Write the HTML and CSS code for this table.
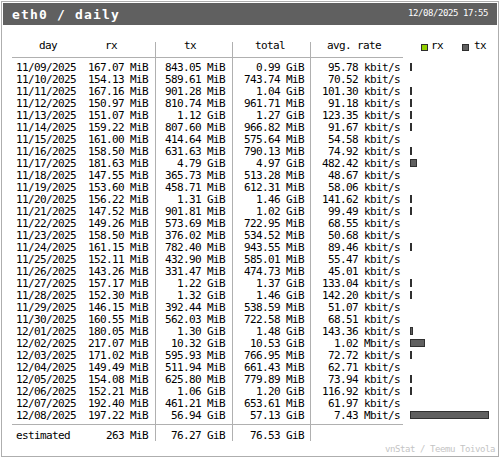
FILE: index.html
```html
<!DOCTYPE html>
<html>
<head>
<meta charset="utf-8">
<link rel="stylesheet" href="styles.css">
</head>
<body>
<div class="frame">
  <div class="header">
    <span class="title">eth0 / daily</span>
    <span class="date">12/08/2025 17:55</span>
  </div>
  <div class="grid">
    <div class="hd k1"><span>day</span><span class="hrx">rx</span></div>
    <div class="hd k2">tx</div>
    <div class="hd k3">total</div>
    <div class="hd k4">avg. rate</div>
    <div class="hd k5"><span class="sq sq-rx"></span><span class="lbl">rx</span><span class="sq sq-tx"></span><span class="lbl lbl-tx">tx</span></div>

    <div class="cell k1 first"><span>11/09/2025</span><span>167.07 MiB</span></div><div class="cell k2 first">843.05 MiB</div><div class="cell k3 first">0.99 GiB</div><div class="cell k4 first">95.78 kbit/s</div><div class="cell k5 first"><div class="bar" style="width:2px"></div></div>
    <div class="cell k1"><span>11/10/2025</span><span>154.13 MiB</span></div><div class="cell k2">589.61 MiB</div><div class="cell k3">743.74 MiB</div><div class="cell k4">70.52 kbit/s</div><div class="cell k5"></div>
    <div class="cell k1"><span>11/11/2025</span><span>167.16 MiB</span></div><div class="cell k2">901.28 MiB</div><div class="cell k3">1.04 GiB</div><div class="cell k4">101.30 kbit/s</div><div class="cell k5"><div class="bar" style="width:2px"></div></div>
    <div class="cell k1"><span>11/12/2025</span><span>150.97 MiB</span></div><div class="cell k2">810.74 MiB</div><div class="cell k3">961.71 MiB</div><div class="cell k4">91.18 kbit/s</div><div class="cell k5"><div class="bar" style="width:2px"></div></div>
    <div class="cell k1"><span>11/13/2025</span><span>151.07 MiB</span></div><div class="cell k2">1.12 GiB</div><div class="cell k3">1.27 GiB</div><div class="cell k4">123.35 kbit/s</div><div class="cell k5"><div class="bar" style="width:2px"></div></div>
    <div class="cell k1"><span>11/14/2025</span><span>159.22 MiB</span></div><div class="cell k2">807.60 MiB</div><div class="cell k3">966.82 MiB</div><div class="cell k4">91.67 kbit/s</div><div class="cell k5"><div class="bar" style="width:2px"></div></div>
    <div class="cell k1"><span>11/15/2025</span><span>161.00 MiB</span></div><div class="cell k2">414.64 MiB</div><div class="cell k3">575.64 MiB</div><div class="cell k4">54.58 kbit/s</div><div class="cell k5"></div>
    <div class="cell k1"><span>11/16/2025</span><span>158.50 MiB</span></div><div class="cell k2">631.63 MiB</div><div class="cell k3">790.13 MiB</div><div class="cell k4">74.92 kbit/s</div><div class="cell k5"><div class="bar" style="width:2px"></div></div>
    <div class="cell k1"><span>11/17/2025</span><span>181.63 MiB</span></div><div class="cell k2">4.79 GiB</div><div class="cell k3">4.97 GiB</div><div class="cell k4">482.42 kbit/s</div><div class="cell k5"><div class="bar" style="width:7px"></div></div>
    <div class="cell k1"><span>11/18/2025</span><span>147.55 MiB</span></div><div class="cell k2">365.73 MiB</div><div class="cell k3">513.28 MiB</div><div class="cell k4">48.67 kbit/s</div><div class="cell k5"></div>
    <div class="cell k1"><span>11/19/2025</span><span>153.60 MiB</span></div><div class="cell k2">458.71 MiB</div><div class="cell k3">612.31 MiB</div><div class="cell k4">58.06 kbit/s</div><div class="cell k5"></div>
    <div class="cell k1"><span>11/20/2025</span><span>156.22 MiB</span></div><div class="cell k2">1.31 GiB</div><div class="cell k3">1.46 GiB</div><div class="cell k4">141.62 kbit/s</div><div class="cell k5"><div class="bar" style="width:2px"></div></div>
    <div class="cell k1"><span>11/21/2025</span><span>147.52 MiB</span></div><div class="cell k2">901.81 MiB</div><div class="cell k3">1.02 GiB</div><div class="cell k4">99.49 kbit/s</div><div class="cell k5"><div class="bar" style="width:2px"></div></div>
    <div class="cell k1"><span>11/22/2025</span><span>149.26 MiB</span></div><div class="cell k2">573.69 MiB</div><div class="cell k3">722.95 MiB</div><div class="cell k4">68.55 kbit/s</div><div class="cell k5"></div>
    <div class="cell k1"><span>11/23/2025</span><span>158.50 MiB</span></div><div class="cell k2">376.02 MiB</div><div class="cell k3">534.52 MiB</div><div class="cell k4">50.68 kbit/s</div><div class="cell k5"></div>
    <div class="cell k1"><span>11/24/2025</span><span>161.15 MiB</span></div><div class="cell k2">782.40 MiB</div><div class="cell k3">943.55 MiB</div><div class="cell k4">89.46 kbit/s</div><div class="cell k5"><div class="bar" style="width:2px"></div></div>
    <div class="cell k1"><span>11/25/2025</span><span>152.11 MiB</span></div><div class="cell k2">432.90 MiB</div><div class="cell k3">585.01 MiB</div><div class="cell k4">55.47 kbit/s</div><div class="cell k5"></div>
    <div class="cell k1"><span>11/26/2025</span><span>143.26 MiB</span></div><div class="cell k2">331.47 MiB</div><div class="cell k3">474.73 MiB</div><div class="cell k4">45.01 kbit/s</div><div class="cell k5"></div>
    <div class="cell k1"><span>11/27/2025</span><span>157.17 MiB</span></div><div class="cell k2">1.22 GiB</div><div class="cell k3">1.37 GiB</div><div class="cell k4">133.04 kbit/s</div><div class="cell k5"><div class="bar" style="width:2px"></div></div>
    <div class="cell k1"><span>11/28/2025</span><span>152.30 MiB</span></div><div class="cell k2">1.32 GiB</div><div class="cell k3">1.46 GiB</div><div class="cell k4">142.20 kbit/s</div><div class="cell k5"><div class="bar" style="width:2px"></div></div>
    <div class="cell k1"><span>11/29/2025</span><span>146.15 MiB</span></div><div class="cell k2">392.44 MiB</div><div class="cell k3">538.59 MiB</div><div class="cell k4">51.07 kbit/s</div><div class="cell k5"></div>
    <div class="cell k1"><span>11/30/2025</span><span>160.55 MiB</span></div><div class="cell k2">562.03 MiB</div><div class="cell k3">722.58 MiB</div><div class="cell k4">68.51 kbit/s</div><div class="cell k5"></div>
    <div class="cell k1"><span>12/01/2025</span><span>180.05 MiB</span></div><div class="cell k2">1.30 GiB</div><div class="cell k3">1.48 GiB</div><div class="cell k4">143.36 kbit/s</div><div class="cell k5"><div class="bar" style="width:3px"></div></div>
    <div class="cell k1"><span>12/02/2025</span><span>217.07 MiB</span></div><div class="cell k2">10.32 GiB</div><div class="cell k3">10.53 GiB</div><div class="cell k4">1.02 Mbit/s</div><div class="cell k5"><div class="bar" style="width:15px"></div></div>
    <div class="cell k1"><span>12/03/2025</span><span>171.02 MiB</span></div><div class="cell k2">595.93 MiB</div><div class="cell k3">766.95 MiB</div><div class="cell k4">72.72 kbit/s</div><div class="cell k5"><div class="bar" style="width:2px"></div></div>
    <div class="cell k1"><span>12/04/2025</span><span>149.49 MiB</span></div><div class="cell k2">511.94 MiB</div><div class="cell k3">661.43 MiB</div><div class="cell k4">62.71 kbit/s</div><div class="cell k5"></div>
    <div class="cell k1"><span>12/05/2025</span><span>154.08 MiB</span></div><div class="cell k2">625.80 MiB</div><div class="cell k3">779.89 MiB</div><div class="cell k4">73.94 kbit/s</div><div class="cell k5"><div class="bar" style="width:2px"></div></div>
    <div class="cell k1"><span>12/06/2025</span><span>152.21 MiB</span></div><div class="cell k2">1.06 GiB</div><div class="cell k3">1.20 GiB</div><div class="cell k4">116.92 kbit/s</div><div class="cell k5"><div class="bar" style="width:2px"></div></div>
    <div class="cell k1"><span>12/07/2025</span><span>192.40 MiB</span></div><div class="cell k2">461.21 MiB</div><div class="cell k3">653.61 MiB</div><div class="cell k4">61.97 kbit/s</div><div class="cell k5"></div>
    <div class="cell k1 last"><span>12/08/2025</span><span>197.22 MiB</span></div><div class="cell k2 last">56.94 GiB</div><div class="cell k3 last">57.13 GiB</div><div class="cell k4 last">7.43 Mbit/s</div><div class="cell k5 last"><div class="bar" style="width:79px"></div></div>

    <div class="ft k1"><span>estimated</span><span>263 MiB</span></div>
    <div class="ft k2">76.27 GiB</div>
    <div class="ft k3">76.53 GiB</div>
    <div class="ft k4"></div>
    <div class="ft k5"></div>
  </div>
  <div class="credit">vnStat / Teemu Toivola</div>
</div>
</body>
</html>
```

FILE: styles.css
```css
* {
  box-sizing: border-box;
}

html, body {
  margin: 0;
  padding: 0;
  background: #ffffff;
}

body {
  width: 500px;
  height: 458px;
  overflow: hidden;
  font-family: "DejaVu Sans Mono", "Liberation Mono", monospace;
  color: #000000;
}

.frame {
  margin: 1px;
  width: 498px;
  height: 456px;
  border: 1px solid #aeaeae;
  padding: 1px;
}

.header {
  height: 22px;
  background: #606060;
  color: #ffffff;
  display: flex;
  justify-content: space-between;
  align-items: flex-start;
  padding: 0 9px 0 9px;
  white-space: pre;
}

.title {
  font-weight: bold;
  font-size: 13px;
  line-height: 13px;
  letter-spacing: 1.17px;
  margin-top: 5px;
}

.date {
  font-size: 9px;
  line-height: 9px;
  letter-spacing: -0.42px;
  margin-top: 6px;
}

.grid {
  display: grid;
  grid-template-columns: 143px 77px 78px 93px 93px;
  margin: 17px 0 0 9px;
  font-size: 11px;
  letter-spacing: -0.62px;
  white-space: pre;
}

.k2, .k3, .k4 {
  border-left: 1px solid #b0b0b0;
}

/* header row */
.hd {
  height: 16px;
  line-height: 8px;
}

.hd.k1, .hd.k2, .hd.k3, .hd.k4 {
  border-bottom: 1px solid #b0b0b0;
}

.hd.k1 {
  display: flex;
  padding-left: 27px;
}

.hrx {
  margin-left: 48px;
}

.hd.k2 { padding-left: 28px; }
.hd.k3 { padding-left: 22px; }
.hd.k4 { padding-left: 16px; }

.hd.k5 {
  display: flex;
  align-items: flex-start;
  padding-left: 18px;
}

.sq {
  width: 7px;
  height: 7px;
  margin-top: 2px;
  border: 1px solid #2e2e2e;
}

.sq-rx { background: #92cf00; }

.sq-tx {
  background: #606060;
  margin-left: 19px;
}

.lbl {
  margin-left: 3px;
}

.lbl-tx {
  margin-left: 5px;
}

/* body rows */
.cell {
  line-height: 12px;
}

.cell.k1, .ft.k1 {
  display: flex;
  justify-content: space-between;
  padding-left: 4px;
  padding-right: 7px;
}

.cell.k2, .ft.k2 {
  text-align: right;
  padding-right: 7px;
}

.cell.k3, .ft.k3 {
  text-align: right;
  padding-right: 6px;
}

.cell.k4, .ft.k4 {
  text-align: right;
  padding-right: 3px;
}

.cell.k5 {
  padding-left: 7px;
}

.cell.first { padding-top: 4px; }
.cell.last { padding-bottom: 2px; }

.bar {
  height: 8px;
  margin-top: 1px;
  background: #606060;
  border: 1px solid #303030;
}

/* footer row */
.ft {
  height: 17px;
  padding-top: 5px;
  line-height: 12px;
}

.ft.k1, .ft.k2, .ft.k3, .ft.k4 {
  border-top: 1px solid #b0b0b0;
}

.credit {
  margin-top: 4px;
  padding-right: 2px;
  text-align: right;
  font-size: 9px;
  line-height: 9px;
  letter-spacing: -0.42px;
  color: #c4c4c4;
  white-space: pre;
}
```
